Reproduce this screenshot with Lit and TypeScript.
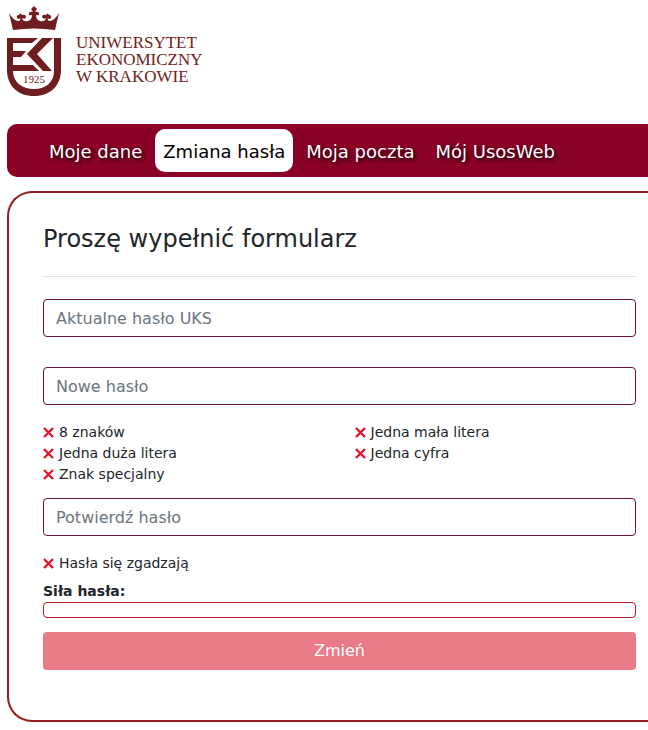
import { LitElement, html, css } from "lit";
import { customElement } from "lit/decorators.js";

@customElement("uek-logo")
class UekLogo extends LitElement {
  static styles = css`
    :host { display: flex; align-items: center; gap: 13px; color: #701d20; }
    svg { display: block; width: 56px; height: 92px; }
    .year { font: 11px "Liberation Serif", serif; }
    .name { font: 17px/17px "Liberation Serif", serif; padding-top: 17px; }
    .name span { display: block; }
  `;
  render() {
    return html`
      <svg viewBox="7 5 56 92" fill="currentColor" role="img" aria-label="UEK 1925">
        <path d="M13 30 L9 13 Q13 20 18 21 Q21 21 20 18 Q19 20 17 18 Q16 15 19 15 Q20 12 22 15 Q26 14 26 17 Q25 20 22 18 Q23 22 28 21 Q32 20 32 15 Q28 16 29 13 Q30 11 33 12 L31 9 L34 6 L37 9 L35 12 Q38 11 39 13 Q40 16 36 15 Q36 20 40 21 Q45 22 46 18 Q43 20 42 17 Q42 14 46 15 Q48 12 49 15 Q52 15 51 18 Q49 20 48 18 Q47 21 50 21 Q55 20 59 13 L55 30 Q34 27 13 30 Z" />
        <path d="M7 38 H38 L32 43 H13 V51 H26 L21 57 H13 V65 H33 L39 71 H13 C13 82 22 89 34 89 C46 89 54 82 54 71 V38 H61 V70 C61 86 50 96 34 96 C18 96 7 86 7 70 Z" />
        <path d="M42 38 H53 L37 54 L52 71 H43 L27 54 Z" />
        <text class="year" x="34" y="83" text-anchor="middle">1925</text>
      </svg>
      <div class="name"><span>UNIWERSYTET</span><span>EKONOMICZNY</span><span>W KRAKOWIE</span></div>
    `;
  }
}

@customElement("password-rule")
class PasswordRule extends LitElement {
  static styles = css`
    :host { display: flex; align-items: center; gap: 5px; font-size: 14px; line-height: 21px; }
    svg { width: 11px; height: 11px; stroke: #e8122a; stroke-width: 2.4; }
  `;
  render() {
    return html`<svg viewBox="0 0 11 11" aria-hidden="true"><path d="M1 1 L10 10 M10 1 L1 10" /></svg><slot></slot>`;
  }
}

@customElement("app-root")
class AppRoot extends LitElement {
  static styles = css`
    :host { display: block; padding: 5px 0 8px 7px; color: #212529; font: 16px/24px Verdana, "DejaVu Sans", sans-serif; }
    * { box-sizing: border-box; }
    nav { display: flex; gap: 5px; margin-top: 27px; padding: 5px 0 5px 34px; background: #8b0026; border-radius: 10px 0 0 10px; }
    nav a { padding: 9px 8px 7px; border-radius: 10px; color: #fff; font-size: 18px; line-height: 27px; text-decoration: none; white-space: nowrap; text-shadow: 2px 2px 4px #000; }
    nav a.active { background: #fff; color: #000; text-shadow: none; }
    main { margin-top: 14px; padding: 31px 12px 50px 34px; border: 2px solid #981b1e; border-right: 0; border-radius: 25px 0 0 25px; }
    h1 { margin: 0; padding-bottom: 22px; border-bottom: 1px solid #e3e3e4; font-size: 24px; line-height: 30px; font-weight: 400; }
    form { margin-top: 22px; }
    input { display: block; width: 100%; height: 38px; padding: 0 12px; border: 1px solid #6b1142; border-radius: 4px; background: #fff; color: inherit; font: inherit; }
    input::placeholder { color: #6c757d; opacity: 1; }
    .gap { margin-top: 30px; }
    .rules { display: grid; grid-template-columns: 1fr 1fr; column-gap: 30px; margin: 17px 0 13px; }
    .match { margin: 17px 0 7px; }
    .strength { font-size: 14px; line-height: 21px; font-weight: 700; }
    .meter { height: 16px; border: 1px solid #b51c28; border-radius: 4px; }
    button { display: block; width: 100%; height: 38px; margin-top: 14px; border: 0; border-radius: 4px; background: #e87b86; color: #fff; font: inherit; }
  `;
  render() {
    return html`
      <uek-logo></uek-logo>
      <nav>
        <a href="#dane">Moje dane</a>
        <a href="#haslo" class="active" aria-current="page">Zmiana hasła</a>
        <a href="#poczta">Moja poczta</a>
        <a href="#usos">Mój UsosWeb</a>
      </nav>
      <main>
        <h1>Proszę wypełnić formularz</h1>
        <form>
          <input type="password" placeholder="Aktualne hasło UKS" aria-label="Aktualne hasło UKS" />
          <input class="gap" type="password" placeholder="Nowe hasło" aria-label="Nowe hasło" />
          <div class="rules">
            <password-rule>8 znaków</password-rule>
            <password-rule>Jedna mała litera</password-rule>
            <password-rule>Jedna duża litera</password-rule>
            <password-rule>Jedna cyfra</password-rule>
            <password-rule>Znak specjalny</password-rule>
          </div>
          <input type="password" placeholder="Potwierdź hasło" aria-label="Potwierdź hasło" />
          <password-rule class="match">Hasła się zgadzają</password-rule>
          <div class="strength" id="strength">Siła hasła:</div>
          <div class="meter" role="meter" aria-labelledby="strength" aria-valuenow="0"></div>
          <button type="button">Zmień</button>
        </form>
      </main>
    `;
  }
}
